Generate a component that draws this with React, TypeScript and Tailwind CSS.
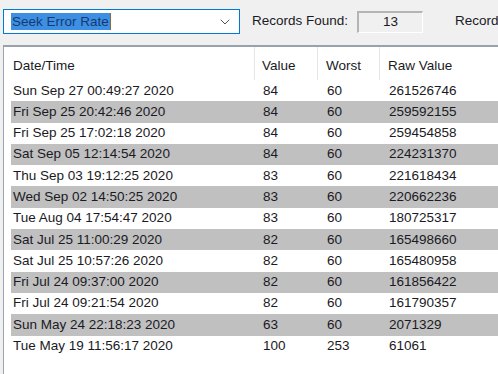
import { ChevronDown } from 'lucide-react'

const rows = [
  ['Sun Sep 27 00:49:27 2020', '84', '60', '261526746'],
  ['Fri Sep 25 20:42:46 2020', '84', '60', '259592155'],
  ['Fri Sep 25 17:02:18 2020', '84', '60', '259454858'],
  ['Sat Sep 05 12:14:54 2020', '84', '60', '224231370'],
  ['Thu Sep 03 19:12:25 2020', '83', '60', '221618434'],
  ['Wed Sep 02 14:50:25 2020', '83', '60', '220662236'],
  ['Tue Aug 04 17:54:47 2020', '83', '60', '180725317'],
  ['Sat Jul 25 11:00:29 2020', '82', '60', '165498660'],
  ['Sat Jul 25 10:57:26 2020', '82', '60', '165480958'],
  ['Fri Jul 24 09:37:00 2020', '82', '60', '161856422'],
  ['Fri Jul 24 09:21:54 2020', '82', '60', '161790357'],
  ['Sun May 24 22:18:23 2020', '63', '60', '2071329'],
  ['Tue May 19 11:56:17 2020', '100', '253', '61061'],
]

export default function App() {
  return (
    <div className="flex h-[374px] w-[498px] flex-col overflow-hidden bg-[#f0f0f0] text-[13.5px] text-[#1a1a24] [font-family:'Liberation_Sans',Arial,sans-serif]">
      <div className="flex items-center whitespace-nowrap pt-[9px] pl-[3px]">
        <div className="flex h-[25px] w-[237px] shrink-0 items-center justify-between border border-[#0078d7] bg-white pl-[7px] pr-[6px]">
          <div className="flex items-center">
            <span className="bg-[#3d8fe3] px-[1px] leading-[17px] text-[#163a70]">Seek Error Rate</span>
            <span className="h-[17px] w-px bg-[#8a6a3a]" />
          </div>
          <ChevronDown className="h-4 w-4 text-[#555]" strokeWidth={1.5} />
        </div>
        <span className="ml-[12px] shrink-0">Records Found:</span>
        <div className="ml-[9px] flex h-[22px] w-[66px] shrink-0 items-center justify-center border-t-2 border-l-2 border-b border-r border-t-[#b4b4b4] border-l-[#b4b4b4] border-b-white border-r-white bg-[#f0f0f0]">
          13
        </div>
        <span className="ml-[32px] shrink-0">Records</span>
      </div>

      <div className="mt-[11px] ml-[3px] w-[520px] flex-1 border-t-2 border-l border-t-[#97a2ae] border-l-[#9aa5b2] bg-white">
        <div className="flex h-[33px]">
          <div className="h-full w-[251px] border-r border-[#e5e5e5] pl-[9px] pt-[2px] leading-[33px]">Date/Time</div>
          <div className="h-full w-[63px] border-r border-[#e5e5e5] pl-[7px] pt-[2px] leading-[33px]">Value</div>
          <div className="h-full w-[62px] border-r border-[#e5e5e5] pl-[8px] pt-[2px] leading-[33px]">Worst</div>
          <div className="h-full flex-1 pl-[8px] pt-[2px] leading-[33px]">Raw Value</div>
        </div>
        <div className="pl-[7px]">
          {rows.map((r, i) => (
            <div
              key={i}
              className={`grid h-[21.3px] grid-cols-[250px_64px_62px_1fr] items-center pl-[2px] ${i % 2 === 1 ? 'bg-[#c0c0c0]' : ''}`}
            >
              <span>{r[0]}</span>
              <span>{r[1]}</span>
              <span>{r[2]}</span>
              <span>{r[3]}</span>
            </div>
          ))}
        </div>
      </div>
    </div>
  )
}
